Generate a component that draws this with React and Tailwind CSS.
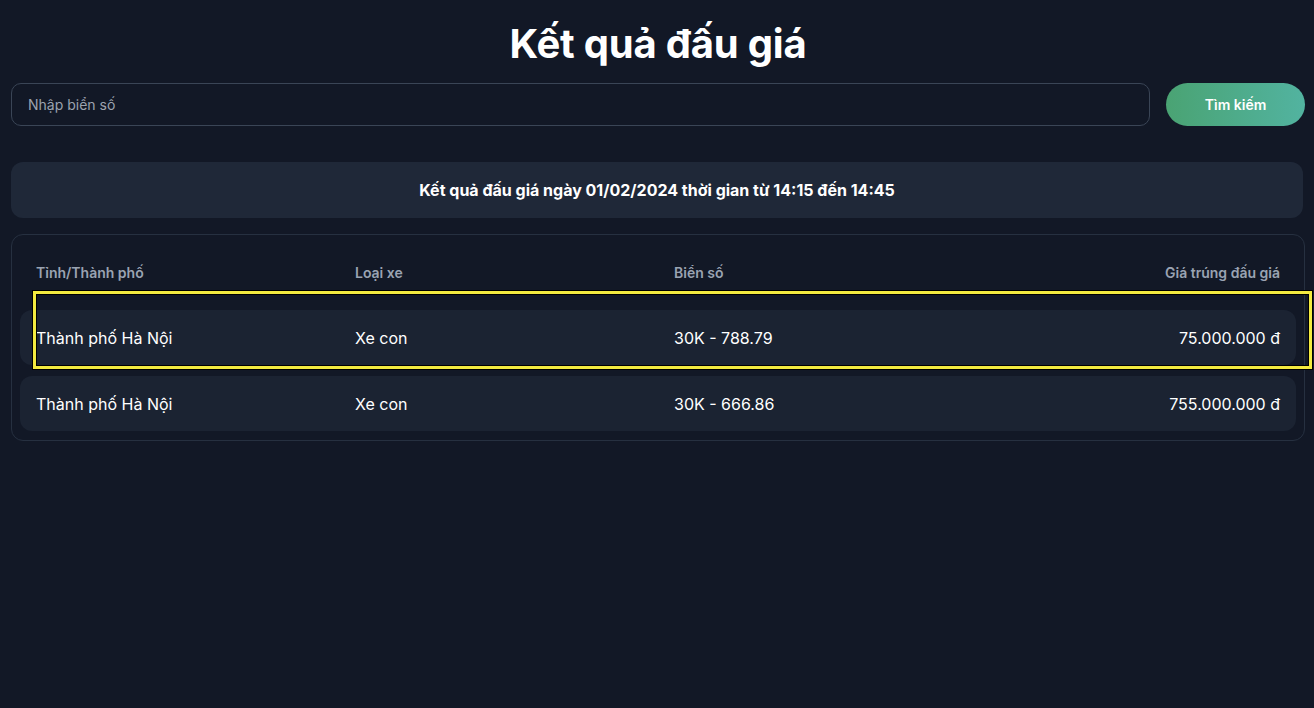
import React from "react";

const rows = [
  { city: "Thành phố Hà Nội", type: "Xe con", plate: "30K - 788.79", price: "75.000.000 đ" },
  { city: "Thành phố Hà Nội", type: "Xe con", plate: "30K - 666.86", price: "755.000.000 đ" },
];

export default function App() {
  return (
    <div
      className="relative min-h-[708px] w-full bg-[#121826] text-white"
      style={{ fontFamily: "Inter, 'Noto Sans', sans-serif" }}
    >
      <div className="pt-[20px] pl-[11px] pr-[9px]">
        <h1 className="text-center text-[40px] leading-[48px] font-bold tracking-[-0.2px]">
          Kết quả đấu giá
        </h1>
        <div className="mt-[15px] flex items-center gap-[16px]">
          <div className="flex h-[43px] flex-1 items-center rounded-[10px] border border-[#3a4556] bg-[#121826] px-[16px]">
            <span className="text-[14px] text-[#9ca3af]">Nhập biển số</span>
          </div>
          <button className="h-[43px] w-[139px] rounded-full bg-gradient-to-r from-[#4aa373] to-[#52b3a0] text-[14px] font-semibold text-white">
            Tìm kiếm
          </button>
        </div>
        <div className="mt-[36px] mr-[2px] flex h-[56px] items-center justify-center rounded-[12px] bg-[#1f2838]">
          <span className="text-[16px] font-bold">
            Kết quả đấu giá ngày 01/02/2024 thời gian từ 14:15 đến 14:45
          </span>
        </div>
        <div className="mt-[16px] rounded-[12px] border border-[#263040] px-[8px] pt-[27px] pb-[9px]">
          <div className="grid grid-cols-[319px_319px_1fr_auto] px-[16px] text-[14px] font-semibold text-[#9aa3b2]">
            <div>Tỉnh/Thành phố</div>
            <div>Loại xe</div>
            <div>Biển số</div>
            <div className="text-right">Giá trúng đấu giá</div>
          </div>
          <div className="mt-[27px] flex flex-col gap-[11px]">
            {rows.map((r, i) => (
              <div
                key={i}
                className="grid h-[55px] grid-cols-[319px_319px_1fr_auto] items-center rounded-[12px] bg-[#1b2332] px-[16px] text-[16px] font-normal"
              >
                <div>{r.city}</div>
                <div>{r.type}</div>
                <div>{r.plate}</div>
                <div className="text-right">{r.price}</div>
              </div>
            ))}
          </div>
        </div>
      </div>
      <div className="pointer-events-none absolute left-[33px] top-[291px] h-[78px] w-[1279px] border-[3px] border-[#f3ea3f] shadow-[0_0_0_1px_#000,inset_0_0_0_1px_#000]" />
    </div>
  );
}
